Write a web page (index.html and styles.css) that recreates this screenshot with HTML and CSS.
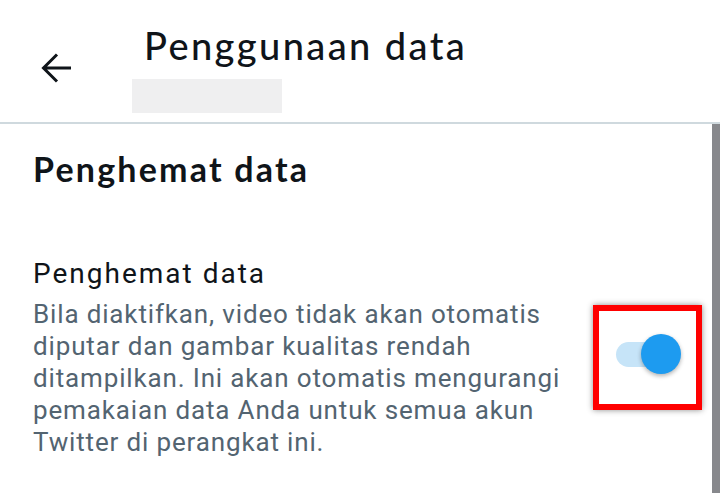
FILE: index.html
```html
<!DOCTYPE html>
<html lang="id">
<head>
<meta charset="utf-8">
<link rel="stylesheet" href="styles.css">
</head>
<body>
<div class="screen">
  <header class="topbar">
    <button class="back" aria-label="Kembali">
      <svg viewBox="0 0 32 32" width="32" height="32"><path d="M31 16H4M17 2.5L3.5 16L17 29.5" fill="none" stroke="#0f1419" stroke-width="3"/></svg>
    </button>
    <div class="titles">
      <h1 class="title">Penggunaan data</h1>
      <div class="subtitle-placeholder"></div>
    </div>
  </header>
  <div class="body">
    <main class="content">
      <h2 class="section-title">Penghemat data</h2>
      <div class="setting">
        <div class="setting-text">
          <div class="setting-label">Penghemat data</div>
          <p class="setting-desc">Bila diaktifkan, video tidak akan otomatis diputar dan gambar kualitas rendah ditampilkan. Ini akan otomatis mengurangi pemakaian data Anda untuk semua akun Twitter di perangkat ini.</p>
        </div>
        <div class="highlight">
          <div class="switch">
            <div class="track"></div>
            <div class="thumb"></div>
          </div>
        </div>
      </div>
    </main>
    <div class="scrollbar"></div>
  </div>
</div>
</body>
</html>
```

FILE: styles.css
```css
* { box-sizing: border-box; }
html, body { margin: 0; padding: 0; background: #fff; }
.screen {
  width: 720px;
  height: 493px;
  overflow: hidden;
  display: flex;
  flex-direction: column;
  font-family: "Roboto", "Liberation Sans", sans-serif;
}
.topbar {
  height: 124px;
  flex: none;
  display: flex;
  border-bottom: 2px solid #cfd9de;
}
.back {
  width: 132px;
  padding: 52px 0 0 40px;
  border: 0;
  background: none;
  display: flex;
  align-items: flex-start;
}
.back svg { display: block; }
.titles {
  display: flex;
  flex-direction: column;
}
.title {
  margin: 0;
  padding: 23px 0 0 12px;
  font-family: "Lato", sans-serif;
  font-weight: 500;
  font-size: 38px;
  line-height: 45px;
  letter-spacing: 2.4px;
  color: #0f1419;
  white-space: nowrap;
}
.subtitle-placeholder {
  margin-top: 11px;
  width: 150px;
  height: 34px;
  background: #efeff0;
}
.body {
  flex: 1;
  display: flex;
}
.content {
  flex: 1;
  padding: 0 0 0 33px;
}
.section-title {
  margin: 0;
  padding-top: 24px;
  font-family: "Lato", sans-serif;
  font-weight: 700;
  font-size: 34px;
  line-height: 41px;
  letter-spacing: 2.2px;
  color: #0f1419;
}
.setting {
  display: flex;
  align-items: flex-start;
  margin-top: 68px;
}
.setting-text { width: 540px; }
.setting-label {
  font-size: 28px;
  line-height: 34px;
  letter-spacing: 2px;
  color: #0f1419;
  margin-bottom: 7px;
}
.setting-desc {
  margin: 0;
  font-size: 26px;
  line-height: 32px;
  letter-spacing: 0.85px;
  color: #536471;
}
.highlight {
  margin: 48px 0 0 20px;
  width: 109px;
  height: 105px;
  flex: none;
  border: 6px solid #ff0000;
  box-shadow: 0 0 6px rgba(0,0,0,0.45);
  position: relative;
}
.switch {
  position: absolute;
  left: 17px;
  top: 23px;
  width: 70px;
  height: 46px;
}
.track {
  position: absolute;
  left: 0;
  top: 8px;
  width: 56px;
  height: 25px;
  border-radius: 13px;
  background: #c6e4f8;
}
.thumb {
  position: absolute;
  left: 25px;
  top: 0;
  width: 40px;
  height: 40px;
  border-radius: 50%;
  background: #1d9bf0;
  box-shadow: 0 2px 4px rgba(0,0,0,0.3);
}
.scrollbar {
  width: 8px;
  flex: none;
  background: #87888c;
}
```
